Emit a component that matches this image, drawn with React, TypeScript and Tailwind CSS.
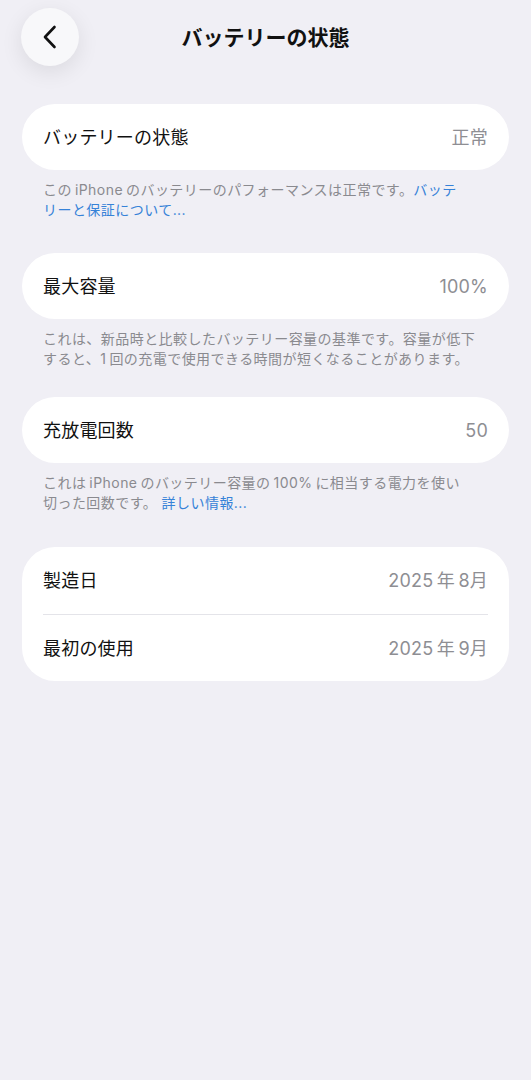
import type { ReactNode } from 'react';

type Row = { label: string; value: string };

const font = "font-['Inter','Noto_Sans_CJK_JP',sans-serif]";

// thin space used between Latin/digits and kana, like the system autospacing
const t = '\u2009';

function BackButton() {
  return (
    <button
      type="button"
      aria-label="戻る"
      className="flex h-[58px] w-[58px] items-center justify-center rounded-full bg-[#f8f8fa] shadow-[0_6px_22px_rgba(0,0,0,0.09)]"
    >
      <svg width="14" height="24" viewBox="0 0 14 24" fill="none">
        <path
          d="M11.5 2 L2 12 L11.5 22"
          stroke="#111"
          strokeWidth="2.6"
          strokeLinecap="round"
          strokeLinejoin="round"
        />
      </svg>
    </button>
  );
}

function Card({ rows, rowHeight = 'h-[66px]' }: { rows: Row[]; rowHeight?: string }) {
  return (
    <div className="rounded-[33px] bg-white px-[21px]">
      {rows.map((row, i) => (
        <div
          key={row.label}
          className={`flex ${rowHeight} items-center justify-between ${
            i > 0 ? 'border-t border-[#e4e4e9]' : ''
          }`}
        >
          <span className="text-[18px] tracking-[0.2px] text-[#111]">{row.label}</span>
          <span className="text-[18px] tracking-[0.2px] text-[#8e8e93]">{row.value}</span>
        </div>
      ))}
    </div>
  );
}

function Note({ children }: { children: ReactNode }) {
  return (
    <p className="mt-[10px] whitespace-pre px-[21px] text-[14px] leading-[20px] tracking-[0.45px] text-[#8a8a8f]">
      {children}
    </p>
  );
}

function Link({ children }: { children: ReactNode }) {
  return <span className="text-[#3682d8]">{children}</span>;
}

export default function App() {
  return (
    <div className={`min-h-[1080px] w-full bg-[#f0eff5] ${font}`}>
      <header className="relative flex h-[75px] items-start px-[21px] pt-[8px]">
        <BackButton />
        <h1 className="absolute inset-x-0 top-[24px] text-center text-[21px] font-bold leading-[28px] text-[#111]">
          バッテリーの状態
        </h1>
      </header>

      <main className="mt-[29px] flex flex-col px-[22px]">
        <section>
          <Card rows={[{ label: 'バッテリーの状態', value: '正常' }]} />
          <Note>
            {`この${t}iPhone${t}のバッテリーのパフォーマンスは正常です。`}
            <Link>バッテ</Link>
            <br />
            <Link>リーと保証について...</Link>
          </Note>
        </section>

        <section className="mt-[33px]">
          <Card rows={[{ label: '最大容量', value: '100%' }]} />
          <Note>
            これは、新品時と比較したバッテリー容量の基準です。容量が低下
            <br />
            {`すると、1${t}回の充電で使用できる時間が短くなることがあります。`}
          </Note>
        </section>

        <section className="mt-[28px]">
          <Card rows={[{ label: '充放電回数', value: '50' }]} />
          <Note>
            {`これは${t}iPhone${t}のバッテリー容量の${t}100%${t}に相当する電力を使い`}
            <br />
            {'切った回数です。 '}
            <Link>詳しい情報...</Link>
          </Note>
        </section>

        <section className="mt-[34px]">
          <Card
            rowHeight="h-[67px]"
            rows={[
              { label: '製造日', value: `2025${t}年${t}8月` },
              { label: '最初の使用', value: `2025${t}年${t}9月` },
            ]}
          />
        </section>
      </main>
    </div>
  );
}
